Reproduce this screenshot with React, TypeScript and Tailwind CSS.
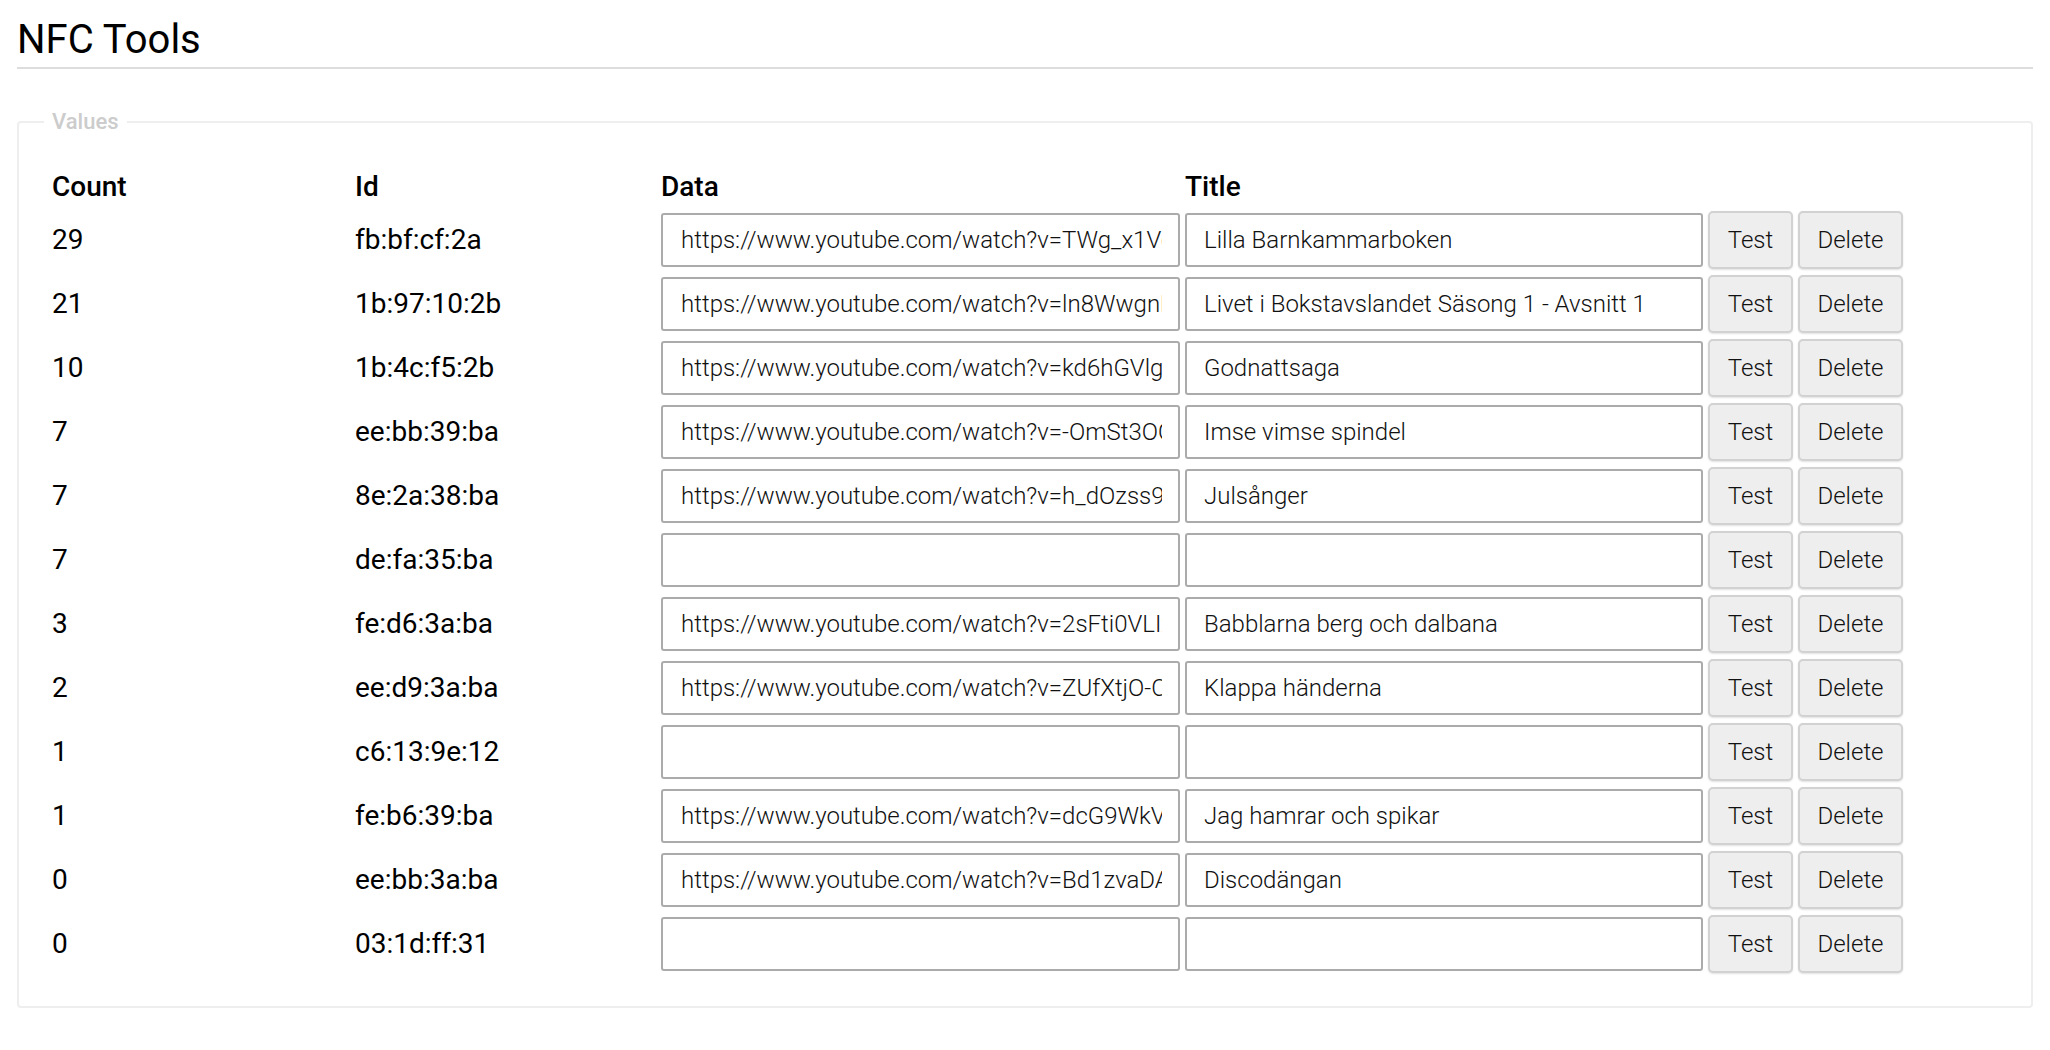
import React from "react";

type Row = { count: number; id: string; data: string; title: string };

const rows: Row[] = [
  { count: 29, id: "fb:bf:cf:2a", data: "https://www.youtube.com/watch?v=TWg_x1Vq8kA", title: "Lilla Barnkammarboken" },
  { count: 21, id: "1b:97:10:2b", data: "https://www.youtube.com/watch?v=ln8WwgnR2tE", title: "Livet i Bokstavslandet Säsong 1 - Avsnitt 1" },
  { count: 10, id: "1b:4c:f5:2b", data: "https://www.youtube.com/watch?v=kd6hGVlgQ0w", title: "Godnattsaga" },
  { count: 7, id: "ee:bb:39:ba", data: "https://www.youtube.com/watch?v=-OmSt3OQk2s", title: "Imse vimse spindel" },
  { count: 7, id: "8e:2a:38:ba", data: "https://www.youtube.com/watch?v=h_dOzss9yTc", title: "Julsånger" },
  { count: 7, id: "de:fa:35:ba", data: "", title: "" },
  { count: 3, id: "fe:d6:3a:ba", data: "https://www.youtube.com/watch?v=2sFti0VLIxk", title: "Babblarna berg och dalbana" },
  { count: 2, id: "ee:d9:3a:ba", data: "https://www.youtube.com/watch?v=ZUfXtjO-C4g", title: "Klappa händerna" },
  { count: 1, id: "c6:13:9e:12", data: "", title: "" },
  { count: 1, id: "fe:b6:39:ba", data: "https://www.youtube.com/watch?v=dcG9WkVbE1o", title: "Jag hamrar och spikar" },
  { count: 0, id: "ee:bb:3a:ba", data: "https://www.youtube.com/watch?v=Bd1zvaDAq5M", title: "Discodängan" },
  { count: 0, id: "03:1d:ff:31", data: "", title: "" },
];

function Btn({ label, w }: { label: string; w: string }) {
  return (
    <button
      type="button"
      className={`${w} h-[58px] bg-[#eeeeee] border-2 border-[#d2d2d2] rounded-[5px] shadow-[0_1px_2px_rgba(0,0,0,0.12)] text-[24px] leading-none font-light text-[#111] font-['Roboto',sans-serif]`}
    >
      {label}
    </button>
  );
}

export default function App() {
  return (
    <div className="min-h-screen bg-white px-[17px] font-['Roboto','Liberation_Sans',sans-serif] text-black">
      <h1 className="pt-[16px] pb-[3px] text-[40px] leading-[48px] font-normal border-b-2 border-[#dddddd]">
        NFC Tools
      </h1>
      <fieldset className="mt-[37px] w-[2016px] border-2 border-[#eeeeee] rounded-[4px] px-[33px] pt-[31px] pb-[33px]">
        <legend className="-ml-[8px] px-[8px] text-[22px] leading-[32px] font-medium text-[#cccccc]">
          Values
        </legend>
        <div className="grid grid-cols-[298px_301px_519px_518px_85px_105px] gap-x-[5px] gap-y-[6px] items-center">
          <div className="h-[36px] flex items-center text-[28px] font-medium">Count</div>
          <div className="h-[36px] flex items-center text-[28px] font-medium">Id</div>
          <div className="h-[36px] flex items-center text-[28px] font-medium">Data</div>
          <div className="h-[36px] flex items-center text-[28px] font-medium">Title</div>
          <div className="h-[36px]" />
          <div className="h-[36px]" />
          {rows.map((r, i) => (
            <React.Fragment key={i}>
              <div className="h-[58px] flex items-center text-[28px]">{r.count}</div>
              <div className="h-[58px] flex items-center text-[28px]">{r.id}</div>
              <input
                readOnly
                defaultValue={r.data}
                className="h-[54px] w-full border-2 border-[#ababab] rounded-[3px] pl-[18px] pr-[16px] text-[24px] font-light text-[#111] bg-white outline-none"
              />
              <input
                readOnly
                defaultValue={r.title}
                className="h-[54px] w-full border-2 border-[#ababab] rounded-[3px] pl-[17px] pr-[16px] text-[24px] font-light text-[#111] bg-white outline-none"
              />
              <Btn label="Test" w="w-[85px]" />
              <Btn label="Delete" w="w-[105px]" />
            </React.Fragment>
          ))}
        </div>
      </fieldset>
    </div>
  );
}
